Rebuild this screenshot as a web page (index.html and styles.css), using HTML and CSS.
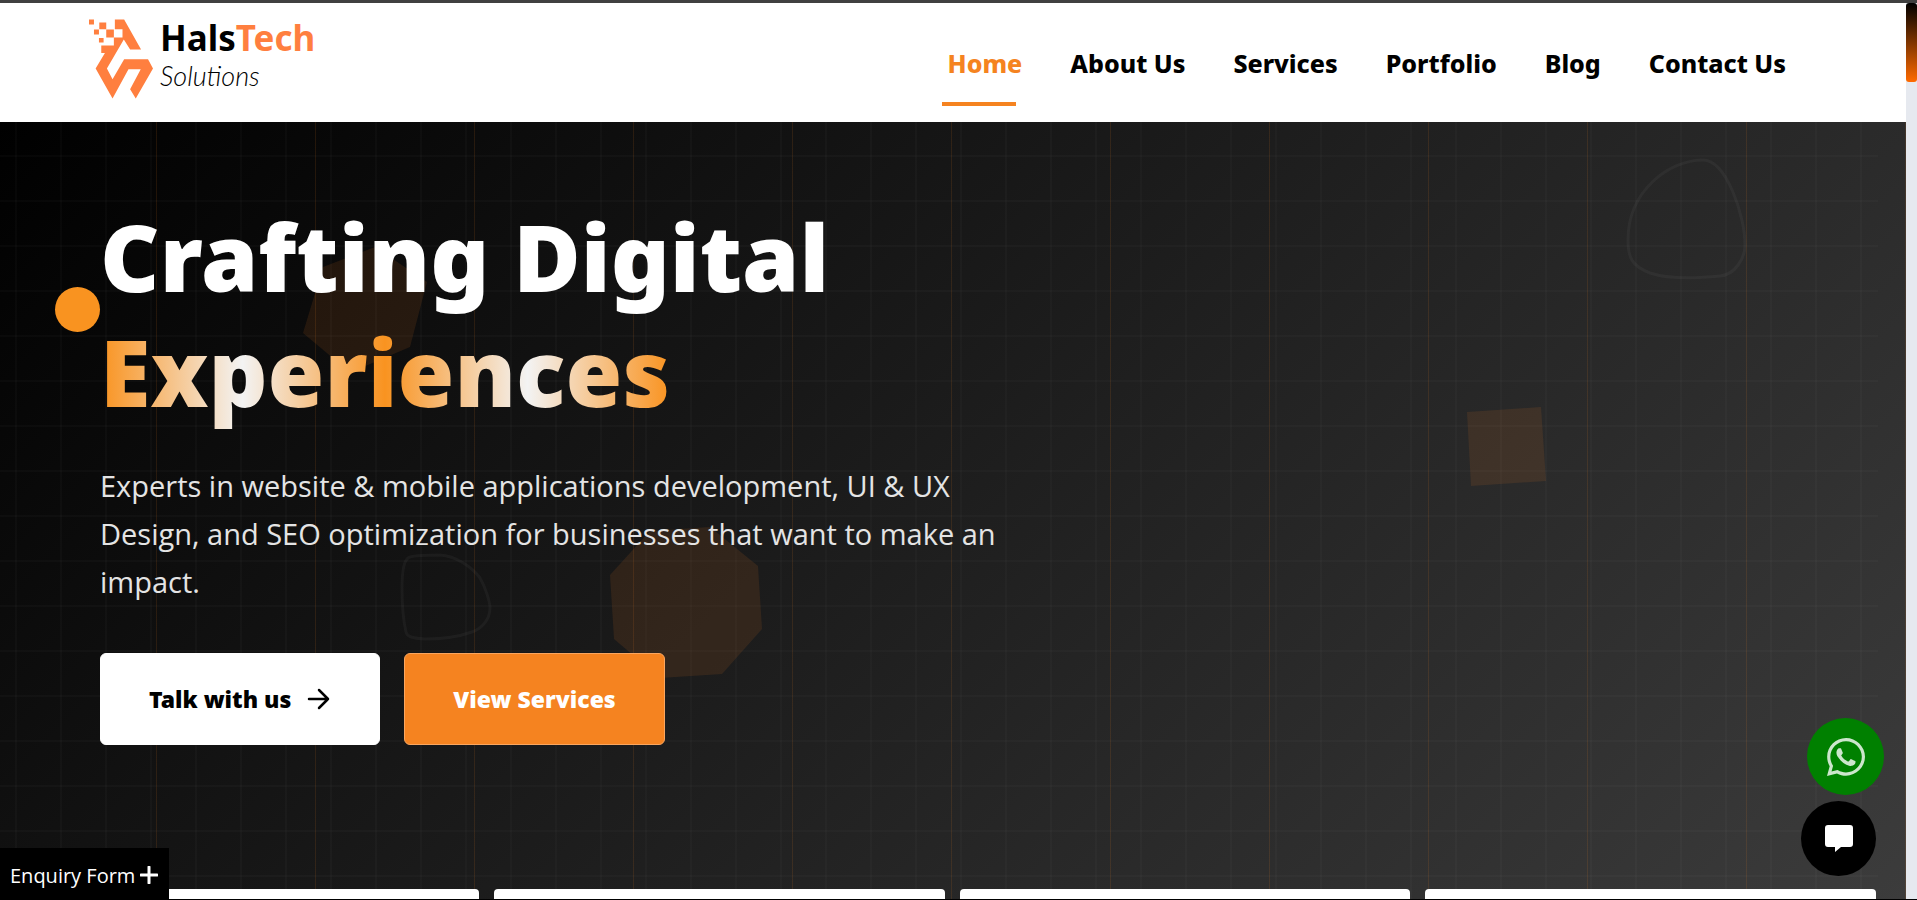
FILE: index.html
```html
<!DOCTYPE html>
<html lang="en">
<head>
    <meta charset="UTF-8">
    <meta name="viewport" content="width=device-width, initial-scale=1.0">
    <title>HalsTech Solutions</title>
    <link rel="stylesheet" href="styles.css">
</head>
<body>
    <div class="page">
        <div class="content">
            <header class="header">
                <a href="#" class="logo">
                    <svg class="logo-mark" viewBox="87 57 193 238" fill="#ff7f3f" aria-hidden="true">
                        <path d="M87 57h15v15H87zM118 66h21v20h-21zM102 87h15v15h-15zM139 87h23v24h-23zM117 113h14v13h-14z"/>
                        <path d="M165 57H193L244 147H211L192 117L141 205L158 237L193 177H265L280 205L228 295L211 267L243 207H206L158 295L107 205L135 158H124V135H162V111H188V86H165Z"/>
                    </svg>
                    <span class="logo-text">
                        <span class="logo-name">Hals<span class="logo-accent">Tech</span></span>
                        <span class="logo-sub">Solutions</span>
                    </span>
                </a>
                <nav class="nav">
                    <a href="#" class="active">Home</a>
                    <a href="#">About Us</a>
                    <a href="#">Services</a>
                    <a href="#">Portfolio</a>
                    <a href="#">Blog</a>
                    <a href="#">Contact Us</a>
                </nav>
            </header>

            <main class="hero">
                <div class="grid-lines"></div>
                <div class="column-lines"></div>

                <!-- floating shapes -->
                <svg class="shape shape-heptagon" viewBox="302 246 126 122"><path d="M303 333L323 267L375 247L427 282L410 347L363 367L340 364Z"/></svg>
                <svg class="shape shape-octagon" viewBox="609 526 154 154"><path d="M610 575L650 531L710 527L758 566L762 629L722 674L660 678L614 639Z"/></svg>
                <svg class="shape shape-square" viewBox="1466 406 80 80"><path d="M1467 412L1541 407L1546 481L1471 486Z"/></svg>
                <svg class="shape outline shape-blob" viewBox="1626 157 122 124"><path d="M1703 160C1726 160 1745 215 1745 245C1745 258 1735 275 1720 276C1690 279 1665 278 1650 273C1632 266 1628 258 1628 240C1628 190 1670 160 1703 160Z"/></svg>
                <svg class="shape outline shape-blob-small" viewBox="399 553 94 88"><path d="M408 558C412 555 430 555 440 555C456 556 472 567 480 578C486 588 490 603 490 608C490 620 481 629 472 632C455 638 435 639 425 639C412 638 407 637 406 632C402 615 402 600 402 588C402 575 403 562 408 558Z"/></svg>
                <div class="dot"></div>

                <section class="intro">
                    <h1>Crafting Digital<br><span class="shine">Experiences</span></h1>
                    <p>Experts in website &amp; mobile applications development, UI &amp; UX Design, and SEO optimization for businesses that want to make an impact.</p>
                    <div class="actions">
                        <button type="button" class="btn">Talk with us
                            <svg class="arrow" viewBox="0 0 24 24" aria-hidden="true"><path d="M2 12H21M12 3L21 12L12 21"/></svg>
                        </button>
                        <button type="button" class="btn btn-orange">View Services</button>
                    </div>
                </section>

                <section class="cards">
                    <div class="card"></div>
                    <div class="card"></div>
                    <div class="card"></div>
                    <div class="card"></div>
                </section>
            </main>
        </div>
        <div class="scroll-track"><div class="scroll-thumb"></div></div>
    </div>

    <button type="button" class="enquiry">Enquiry Form
        <svg viewBox="0 0 18 18" aria-hidden="true"><path d="M9 1V17M1 9H17"/></svg>
    </button>
    <a href="#" class="float-btn whatsapp" aria-label="WhatsApp">
        <svg viewBox="0 0 448 448" aria-hidden="true"><path d="M380.900 65.100C339 23.100 283.200 0 223.900 0 101.500 0 1.900 99.600 1.900 222c0 39.100 10.200 77.300 29.600 111L0 448l117.700-30.900c32.400 17.700 68.900 27 106.100 27h.1c122.300 0 224.100-99.600 224.100-222 0-59.300-25.200-115-67.100-157zm-157 341.600c-33.200 0-65.700-8.900-94-25.700l-6.700-4-69.800 18.300L72 327.200l-4.400-7c-18.500-29.400-28.200-63.300-28.200-98.200 0-101.700 82.800-184.500 184.600-184.500 49.300 0 95.600 19.200 130.400 54.100 34.800 34.900 56.200 81.200 56.100 130.500 0 101.800-84.900 184.600-186.600 184.600zm101.200-138.200c-5.500-2.800-32.800-16.200-37.900-18-5.100-1.900-8.800-2.800-12.500 2.800-3.700 5.600-14.300 18-17.600 21.800-3.200 3.700-6.500 4.200-12 1.400-32.600-16.300-54-29.100-75.500-66-5.700-9.800 5.700-9.100 16.300-30.300 1.800-3.700.9-6.900-.5-9.700-1.400-2.800-12.500-30.100-17.100-41.200-4.500-10.800-9.100-9.300-12.500-9.500-3.200-.2-6.900-.2-10.600-.2-3.700 0-9.700 1.400-14.800 6.900-5.100 5.600-19.400 19-19.400 46.300s19.900 53.700 22.600 57.400c2.800 3.700 39.100 59.700 94.800 83.800 35.200 15.200 49 16.500 66.600 13.900 10.700-1.600 32.800-13.400 37.400-26.400 4.600-13 4.600-24.100 3.200-26.400-1.300-2.500-5-3.900-10.500-6.600z"/></svg>
    </a>
    <button type="button" class="float-btn chat" aria-label="Chat">
        <svg viewBox="0 0 28 27" aria-hidden="true"><path d="M3 0H25Q28 0 28 3V19Q28 22 25 22H16L10 27V22H3Q0 22 0 19V3Q0 0 3 0Z"/></svg>
    </button>
</body>
</html>
```
FILE: styles.css
```css
* {
    box-sizing: border-box;
}

body {
    margin: 0;
    height: 100vh;
    overflow: hidden;
    background: #000;
    border-top: 3px solid #404040;
    border-bottom: 1px solid #000;
    font-family: "Open Sans", "Noto Sans", sans-serif;
}

a {
    color: inherit;
    text-decoration: none;
}

button {
    font-family: inherit;
    border: none;
    cursor: pointer;
}

.page {
    display: flex;
    height: 100%;
}

.content {
    flex: 1;
    display: flex;
    flex-direction: column;
}

.scroll-track {
    width: 11px;
    background: #e6e9ef;
}

.scroll-thumb {
    height: 79px;
    border-radius: 3px;
    background: linear-gradient(#000, #ff6a00);
}

/* header */
.header {
    display: flex;
    justify-content: space-between;
    align-items: center;
    flex: none;
    height: 119px;
    padding: 0 120px 0 89px;
    background: #fff;
}

.logo {
    display: flex;
    align-items: center;
    gap: 7px;
    padding-bottom: 8px;
}

.logo-mark {
    width: 64px;
    height: 80px;
}

.logo-text {
    display: flex;
    flex-direction: column;
    padding-bottom: 6px;
}

.logo-name {
    font-family: "Noto Sans", sans-serif;
    font-size: 35px;
    font-weight: 700;
    line-height: 40px;
}

.logo-accent {
    color: #ff7f3f;
}

.logo-sub {
    font-family: Lato, cursive;
    font-size: 27px;
    font-style: italic;
    font-weight: 300;
    line-height: 36px;
}

.nav {
    display: flex;
    gap: 48px;
    font-family: "Noto Sans", sans-serif;
    font-size: 25px;
    font-weight: 800;
    line-height: 32px;
}

.nav a {
    position: relative;
}

.nav .active {
    color: #f58320;
}

.nav .active::after {
    content: "";
    position: absolute;
    left: -6px;
    right: 6px;
    bottom: -27px;
    height: 4px;
    background: #f58320;
}

/* hero */
.hero {
    position: relative;
    flex: 1;
    overflow: hidden;
    background: linear-gradient(135deg, #000, #3c3c3c);
}

.grid-lines,
.column-lines {
    position: absolute;
    inset: 0;
}

.grid-lines {
    right: 28px;
    background-image:
        linear-gradient(rgba(255, 255, 255, 0.02) 2px, transparent 2px),
        linear-gradient(90deg, rgba(255, 255, 255, 0.02) 2px, transparent 2px);
    background-size: 45px 45px;
    background-position: 15px 33px;
}

.column-lines {
    background-image: linear-gradient(90deg, rgba(245, 131, 32, 0.12) 1px, transparent 1px);
    background-size: 159px 100%;
    background-position: -3px 0;
}

.shape {
    position: absolute;
    fill: rgba(245, 131, 32, 0.11);
}

.outline {
    fill: none;
    stroke: rgba(255, 255, 255, 0.04);
    stroke-width: 3;
}

.shape-heptagon {
    left: 302px;
    top: 124px;
    width: 126px;
}

.shape-octagon {
    left: 609px;
    top: 404px;
    width: 154px;
}

.shape-square {
    right: 360px;
    top: 284px;
    width: 80px;
}

.shape-blob {
    right: 158px;
    top: 35px;
    width: 122px;
}

.shape-blob-small {
    left: 399px;
    top: 431px;
    width: 94px;
}

.dot {
    position: absolute;
    left: 55px;
    top: 165px;
    width: 45px;
    height: 45px;
    border-radius: 50%;
    background: #f99320;
}

.intro {
    position: relative;
    padding: 77px 100px 0;
}

.intro h1 {
    margin: 0;
    color: #fff;
    font-family: "Noto Sans", sans-serif;
    font-size: 92px;
    font-weight: 900;
    line-height: 115px;
}

.shine {
    background: linear-gradient(90deg, #f99320, #f3f3f3, #f99320, #f3f3f3, #f99320);
    background-clip: text;
    -webkit-background-clip: text;
    color: transparent;
}

.intro p {
    max-width: 900px;
    margin: 33px 0 47px;
    color: #e4e4e4;
    font-size: 29px;
    line-height: 48px;
}

.actions {
    display: flex;
    gap: 24px;
}

.btn {
    display: flex;
    align-items: center;
    gap: 16px;
    height: 92px;
    padding: 0 48px;
    border: 1px solid #fff;
    border-radius: 6px;
    background: #fff;
    color: #000;
    font-family: "Noto Sans", sans-serif;
    font-size: 23px;
    font-weight: 900;
}

.btn-orange {
    border-color: #faa65f;
    background: #f58320;
    color: #fff;
}

.arrow {
    width: 24px;
    height: 24px;
    fill: none;
    stroke: #000;
    stroke-width: 2.5;
    stroke-linecap: round;
    stroke-linejoin: round;
}

.cards {
    position: relative;
    display: grid;
    grid-template-columns: repeat(4, 1fr);
    gap: 15px;
    margin-top: 144px;
    padding: 0 30px 0 28px;
}

.card {
    height: 240px;
    border-radius: 4px;
    background: #fff;
}

/* fixed widgets */
.enquiry {
    position: fixed;
    left: 0;
    bottom: 1px;
    display: flex;
    align-items: center;
    gap: 5px;
    height: 51px;
    padding: 3px 11px 0 10px;
    background: #000;
    color: #fff;
    font-size: 20px;
}

.enquiry svg {
    width: 18px;
    height: 18px;
    stroke: #fff;
    stroke-width: 3;
    stroke-linecap: round;
}

.float-btn {
    position: fixed;
    display: flex;
    align-items: center;
    justify-content: center;
    padding: 0;
    border-radius: 50%;
}

.whatsapp {
    right: 33px;
    bottom: 105px;
    width: 77px;
    height: 77px;
    background: #008000;
}

.whatsapp svg {
    width: 38px;
    fill: #cce6cc;
}

.chat {
    right: 41px;
    bottom: 24px;
    width: 75px;
    height: 75px;
    background: #000;
}

.chat svg {
    width: 28px;
    fill: #fff;
}
```
